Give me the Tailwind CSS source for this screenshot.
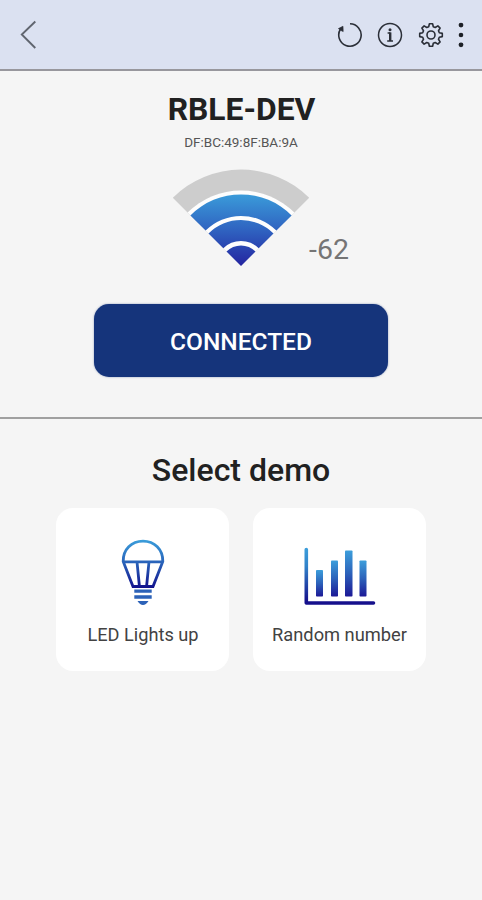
<!DOCTYPE html>
<html lang="en">
<head>
  <meta charset="utf-8" />
  <meta name="viewport" content="width=device-width, initial-scale=1" />
  <title>RBLE-DEV</title>
  <script src="https://cdn.jsdelivr.net/npm/@tailwindcss/browser@4"></script>
</head>
<body class="min-h-screen flex flex-col bg-[#f5f5f5] font-['Roboto',sans-serif] text-[#212121]">
  <!-- Top bar -->
  <header class="h-[71px] shrink-0 flex items-center justify-between bg-[#dbe1f1] border-b-2 border-[#98979d] pl-5 pr-[15px]">
    <button aria-label="Back">
      <svg class="block w-[17px] h-[29px]" viewBox="0 0 17 29" fill="none" stroke="#60656f" stroke-width="1.9">
        <path d="M15.3 1.5 1.8 14.5 15.3 28" />
      </svg>
    </button>
    <div class="flex items-center gap-[14.5px]">
      <!-- refresh -->
      <svg class="w-[26px] h-[26px]" viewBox="-13 -13 26 26" fill="none" stroke="#2b2f38" stroke-width="1.6">
        <path d="M0-11.2A11.2 11.2 0 1 1-9.5-6" />
        <path fill="#2b2f38" stroke-width=".6" d="M-11.6-6.4-7-8.8-6.8-3.4-9.2-4.6Z" />
      </svg>
      <!-- info -->
      <svg class="w-[26px] h-[26px]" viewBox="-13 -13 26 26" fill="none" stroke="#2b2f38" stroke-width="1.5">
        <circle r="11.5" />
        <path d="M-2.4-2H.4M-2.8 6H3" stroke-width="1.4" />
        <path d="M.2-2.6V6" stroke-width="2.4" />
        <circle cy="-5.2" r="1.5" fill="#2b2f38" stroke="none" />
      </svg>
      <!-- settings -->
      <svg class="w-[26px] h-[26px]" viewBox="-13 -13 26 26" fill="none" stroke="#2b2f38" stroke-width="1.6" stroke-linejoin="round">
        <path d="M-2.3-8.3-1.6-11.3H1.6L2.3-8.3 4.24-7.5 6.86-9.12 9.12-6.86 7.5-4.24 8.3-2.3 11.3-1.6V1.6L8.3 2.3 7.5 4.24 9.12 6.86 6.86 9.12 4.24 7.5 2.3 8.3 1.6 11.3H-1.6L-2.3 8.3-4.24 7.5-6.86 9.12-9.12 6.86-7.5 4.24-8.3 2.3-11.3 1.6V-1.6L-8.3-2.3-7.5-4.24-9.12-6.86-6.86-9.12-4.24-7.5Z" />
        <circle r="4" />
      </svg>
      <!-- more -->
      <svg class="-ml-[3px] w-[12px] h-[26px]" viewBox="-6 -13 12 26" fill="#1d2027">
        <circle cy="-9.9" r="2.4" />
        <circle r="2.3" />
        <circle cy="9.8" r="2.4" />
      </svg>
    </div>
  </header>

  <!-- Device status -->
  <section class="h-[348px] shrink-0 flex flex-col items-center border-b-2 border-[#a0a0a0] pt-[20px]">
    <h1 class="pl-px text-[31.8px] leading-[36px] font-bold">RBLE-DEV</h1>
    <p class="mt-[7px] text-[13.5px] leading-4 text-[#555]">DF:BC:49:8F:BA:9A</p>
    <div class="relative mt-[18.5px]">
      <svg class="block w-[138px] h-[98px]" viewBox="-69 -97 138 98">
        <defs>
          <linearGradient id="signal" gradientUnits="userSpaceOnUse" x1="0" y1="-71" x2="0" y2="0">
            <stop offset="0" stop-color="#3a9ad9" />
            <stop offset=".5" stop-color="#2f62c0" />
            <stop offset="1" stop-color="#2424a0" />
          </linearGradient>
        </defs>
        <path fill="#cdcdcd" d="M0 0-68.2-68.2A96.5 96.5 0 0 1 68.2-68.2Z" />
        <path fill="#fdfdfd" d="M0 0-53.4-53.4A75.5 75.5 0 0 1 53.4-53.4Z" />
        <path fill="url(#signal)" d="M-50.6-50.6A71.5 71.5 0 0 1 50.6-50.6L35.4-35.4A50 50 0 0 0-35.4-35.4Z" />
        <path fill="url(#signal)" d="M-32.5-32.5A46 46 0 0 1 32.5-32.5L17.7-17.7A25 25 0 0 0-17.7-17.7Z" />
        <path fill="url(#signal)" d="M0 0-14.5-14.5A20.5 20.5 0 0 1 14.5-14.5Z" />
      </svg>
      <span class="absolute left-[137px] top-[64.5px] text-[28.5px] leading-[34px] text-[#757575]">-62</span>
    </div>
    <button class="mt-[37px] w-[294px] h-[73px] rounded-[15px] bg-[#15347b] pt-[4px] text-[24.5px] font-medium text-white shadow-[0_0_2px_#15347b80]">CONNECTED</button>
  </section>

  <!-- Demo picker -->
  <section class="flex flex-col items-center pt-[32px]">
    <h2 class="text-[32px] leading-[38px] font-medium">Select demo</h2>
    <div class="mt-[19px] flex gap-6">
      <a class="w-[173px] h-[163px] rounded-[17px] bg-white flex flex-col items-center pt-[31px]">
        <svg class="w-[44px] h-[68px]" viewBox="0 0 44 68" fill="none">
          <defs>
            <linearGradient id="bulb" gradientUnits="userSpaceOnUse" x1="0" y1="0" x2="0" y2="49">
              <stop offset="0" stop-color="#3ba0dc" />
              <stop offset=".5" stop-color="#2860b8" />
              <stop offset="1" stop-color="#11118c" />
            </linearGradient>
          </defs>
          <path stroke="url(#bulb)" stroke-width="2.8" d="M2.2 22.5C2 10.5 10.5 2.2 22 2.2S42 10.5 41.8 22.5L32 47.5H12ZM2.2 22.9H41.8M16 22.9 18.4 47M28 22.9 25.6 47" />
          <path fill="#2c62b8" d="M13.3 50.5H30.7V53.8H13.3ZM13.3 56.3H30.7V59.8H13.3ZM16.5 62H27.5Q25 66 22 66T16.5 62Z" />
        </svg>
        <span class="mt-[17px] pl-px text-[18.2px] leading-[22px] text-[#424242]">LED Lights up</span>
      </a>
      <a class="w-[173px] h-[163px] rounded-[17px] bg-white flex flex-col items-center pt-[31px]">
        <svg class="w-[72px] h-[68px]" viewBox="0 0 72 68">
          <defs>
            <linearGradient id="chart" gradientUnits="userSpaceOnUse" x1="0" y1="9" x2="0" y2="62">
              <stop offset="0" stop-color="#3c9edb" />
              <stop offset=".35" stop-color="#3182c9" />
              <stop offset="1" stop-color="#15108c" />
            </linearGradient>
            <linearGradient id="bar" x1="0" y1="0" x2="0" y2="1">
              <stop offset="0" stop-color="#3c9edb" />
              <stop offset=".5" stop-color="#2c62ba" />
              <stop offset="1" stop-color="#1c1896" />
            </linearGradient>
          </defs>
          <path fill="none" stroke="url(#chart)" stroke-width="3.6" stroke-linecap="round" stroke-linejoin="round" d="M2.3 10.5V64H69.5" />
          <g fill="url(#bar)">
            <rect x="12" y="31" width="7" height="26.5" rx=".8" />
            <rect x="27" y="21.5" width="7" height="36" rx=".8" />
            <rect x="41" y="11.5" width="7.5" height="46" rx=".8" />
            <rect x="55.5" y="21.5" width="7" height="36" rx=".8" />
          </g>
        </svg>
        <span class="mt-[17px] text-[18.3px] leading-[22px] text-[#424242]">Random number</span>
      </a>
    </div>
  </section>
</body>
</html>
